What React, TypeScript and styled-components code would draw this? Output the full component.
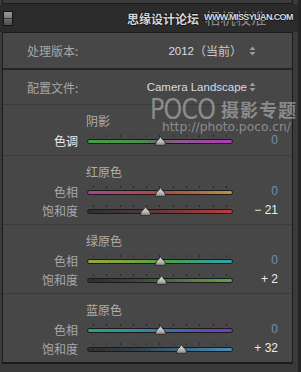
import styled, { createGlobalStyle } from "styled-components";

const GlobalStyle = createGlobalStyle`
  html, body {
    margin: 0;
    padding: 0;
    background: #2b2b2b;
  }
  body {
    font-family: "Noto Sans CJK SC", "Liberation Sans", sans-serif;
  }
`;

type Track = { label: string; value: number; gradient: string; hot?: boolean };
type Section = { title: string; tracks: Track[] };

const sections: Section[] = [
  {
    title: "阴影",
    tracks: [
      {
        label: "色调",
        value: 0,
        hot: true,
        gradient:
          "linear-gradient(90deg, #3fa33f 0%, #4d904d 35%, #686868 50%, #8a5a8c 65%, #b238b8 100%)",
      },
    ],
  },
  {
    title: "红原色",
    tracks: [
      {
        label: "色相",
        value: 0,
        gradient:
          "linear-gradient(90deg, #a8468c 0%, #ad4660 30%, #b04646 50%, #b0683e 75%, #b8953e 100%)",
      },
      {
        label: "饱和度",
        value: -21,
        gradient:
          "linear-gradient(90deg, #2e2e2e 0%, #4e3838 35%, #853a3a 70%, #c43a3a 100%)",
      },
    ],
  },
  {
    title: "绿原色",
    tracks: [
      {
        label: "色相",
        value: 0,
        gradient:
          "linear-gradient(90deg, #9aa838 0%, #78a440 30%, #4aa04a 55%, #3aa086 80%, #2fa3a8 100%)",
      },
      {
        label: "饱和度",
        value: 2,
        gradient:
          "linear-gradient(90deg, #2e2e2e 0%, #3a4a38 35%, #4f7f42 70%, #62a54a 100%)",
      },
    ],
  },
  {
    title: "蓝原色",
    tracks: [
      {
        label: "色相",
        value: 0,
        gradient:
          "linear-gradient(90deg, #2fa27a 0%, #3190a0 30%, #3a72ac 55%, #5a4eb2 80%, #7a3ab8 100%)",
      },
      {
        label: "饱和度",
        value: 32,
        gradient:
          "linear-gradient(90deg, #2e2e2e 0%, #36424a 35%, #3f6c8a 70%, #4a8fb6 100%)",
      },
    ],
  },
];

const Page = styled.div`
  position: relative;
  width: 301px;
  height: 372px;
  display: flex;
  background: #2b2b2b;
  overflow: hidden;
`;

const Column = styled.div`
  width: 298px;
  display: flex;
  flex-direction: column;
  background: #3a3a3a;
`;

const Gutter = styled.div`
  flex: 1;
  background: #242424;
`;

const PrevEdge = styled.div`
  height: 3px;
  margin: 0 5px 0 2px;
  background: #3c3c3c;
  border: 1px solid #1b1b1b;
  border-top: none;
`;

const Header = styled.div`
  position: relative;
  height: 28px;
  display: flex;
  align-items: center;
  padding: 0 10px 0 3px;
  background: #2b2b2b;
`;

const Toggle = styled.div`
  width: 8px;
  height: 13px;
  border: 1px solid #141414;
  border-radius: 1px;
  background: linear-gradient(
    180deg,
    #9a9a9a 0%,
    #7c7c7c 45%,
    #3e3e3e 45%,
    #3e3e3e 55%,
    #6a6a6a 55%,
    #4e4e4e 100%
  );
`;

const HeaderTitle = styled.span`
  margin-left: auto;
  color: #8c8c8c;
  font-size: 15px;
  line-height: 18px;
  letter-spacing: 0.5px;
`;

const Caret = styled.svg`
  margin-left: 15px;
  margin-top: 3px;
`;

const MarkCn = styled.span`
  position: absolute;
  left: 127px;
  top: 7px;
  color: #d4d4d4;
  font-size: 12px;
  font-weight: bold;
  line-height: 15px;
  text-shadow: -1px 0 #151515, 1px 0 #151515, 0 -1px #151515, 0 1px #151515;
`;

const MarkUrl = styled.span`
  position: absolute;
  left: 204px;
  top: 8px;
  color: #d8d8d8;
  font-family: "Liberation Sans", sans-serif;
  font-size: 9px;
  font-weight: bold;
  letter-spacing: -0.6px;
  line-height: 10px;
  text-shadow: -1px 0 #151515, 1px 0 #151515, 0 -1px #151515, 0 1px #151515;
`;

const Panel = styled.div`
  width: 291px;
  margin-left: 2px;
  box-sizing: border-box;
  background: #474747;
  border: 1px solid #1c1c1c;
  border-bottom-width: 2px;
`;

const SettingRow = styled.div<{ $h: number }>`
  height: ${(p) => p.$h}px;
  display: flex;
  align-items: center;
  padding: 0 36px 0 24px;
  font-size: 12px;
`;

const SettingLabel = styled.span`
  color: #a6a6a6;
`;

const SettingValue = styled.span`
  margin-left: auto;
  display: flex;
  align-items: center;
  color: #c9c9c9;
`;

const Latin = styled.span`
  font-family: "Liberation Sans", sans-serif;
  font-size: 11.5px;
  color: #d6dbe4;
`;

const Stepper = styled.svg<{ $gap: number }>`
  margin-left: ${(p) => p.$gap}px;
`;

const Divider = styled.div<{ $dark?: boolean }>`
  height: ${(p) => (p.$dark ? 2 : 1)}px;
  background: ${(p) => (p.$dark ? "#262626" : "#3b3b3b")};
`;

const SectionBox = styled.div<{ $pb: number }>`
  padding: 9px 0 ${(p) => p.$pb}px;
`;

const SectionTitle = styled.div`
  padding-left: 83px;
  margin-bottom: 3px;
  color: #aeaeae;
  font-size: 12px;
  line-height: 14px;
`;

const SliderRow = styled.div`
  display: grid;
  grid-template-columns: 84px 146px 45px;
  height: 19px;
  align-items: start;
`;

const SliderLabel = styled.span<{ $hot?: boolean }>`
  padding-right: 9px;
  text-align: right;
  color: ${(p) => (p.$hot ? "#ececec" : "#a8a8a8")};
  font-size: 12px;
  line-height: 19px;
`;

const SliderTrack = styled.div`
  position: relative;
  height: 19px;
`;

const Ticks = styled.div`
  display: flex;
  justify-content: space-between;
  height: 2px;
  margin-top: 4px;
  padding: 0 6px;
`;

const Tick = styled.i`
  width: 1px;
  height: 2px;
  background: #262626;
`;

const Rail = styled.div`
  height: 3px;
  margin-top: 2px;
  border: 1px solid #1a1a1a;
  border-radius: 3px;
`;

const Thumb = styled.svg`
  position: absolute;
  top: 5px;
`;

const SliderValue = styled.span<{ $zero: boolean }>`
  text-align: right;
  font-family: "Liberation Sans", sans-serif;
  font-size: 12px;
  line-height: 19px;
  color: ${(p) => (p.$zero ? "#7290ae" : "#ececec")};
  white-space: pre;
`;

const Poco = styled.div`
  position: absolute;
  left: 150px;
  top: 97px;
  display: flex;
  flex-direction: column;
  color: rgba(255, 255, 255, 0.38);
  pointer-events: none;
`;

const PocoTop = styled.div`
  display: flex;
  align-items: center;
  height: 24px;
`;

const PocoWord = styled.span`
  display: inline-block;
  font-family: "DejaVu Sans", sans-serif;
  font-size: 29px;
  line-height: 24px;
  letter-spacing: -1px;
  transform: scaleX(0.82);
  transform-origin: left center;
  width: 71px;
`;

const PocoCn = styled.span`
  font-size: 18px;
  font-weight: bold;
  line-height: 22px;
  letter-spacing: 1px;
`;

const PocoUrl = styled.span`
  margin-left: 12px;
  font-family: "DejaVu Sans", sans-serif;
  font-size: 12.3px;
  line-height: 12px;
`;

const formatValue = (v: number) =>
  v === 0 ? "0" : v < 0 ? `\u2212 ${Math.abs(v)}` : `+ ${v}`;

const Slider = ({ track }: { track: Track }) => {
  const left = 6 + ((track.value + 100) / 200) * 134 - 5.5;
  return (
    <SliderRow>
      <SliderLabel $hot={track.hot}>{track.label}</SliderLabel>
      <SliderTrack>
        <Ticks>
          {Array.from({ length: 11 }).map((_, i) => (
            <Tick key={i} />
          ))}
        </Ticks>
        <Rail style={{ background: track.gradient }} />
        <Thumb width="11" height="10" viewBox="0 0 11 10" style={{ left }}>
          <defs>
            <linearGradient id="thumbFill" x1="0" y1="0" x2="0" y2="1">
              <stop offset="0" stopColor="#e0e0e0" />
              <stop offset="0.6" stopColor="#b8b8b8" />
              <stop offset="1" stopColor="#8a8a8a" />
            </linearGradient>
          </defs>
          <path
            d="M5.5 0.5 L7.2 3.2 Q10.3 4.8 10.3 7.6 L10.3 9.3 L0.7 9.3 L0.7 7.6 Q0.7 4.8 3.8 3.2 Z"
            fill="url(#thumbFill)"
            stroke="#2a2a2a"
            strokeWidth="0.9"
            strokeLinejoin="round"
          />
        </Thumb>
      </SliderTrack>
      <SliderValue $zero={track.value === 0}>{formatValue(track.value)}</SliderValue>
    </SliderRow>
  );
};

const UpDown = ({ gap }: { gap: number }) => (
  <Stepper $gap={gap} width="7" height="10" viewBox="0 0 7 10">
    <path d="M3.5 0.5 L6.5 4 L0.5 4 Z" fill="#9a9a9a" />
    <path d="M0.5 6 L6.5 6 L3.5 9.5 Z" fill="#9a9a9a" />
  </Stepper>
);

export default function App() {
  return (
    <>
      <GlobalStyle />
      <Page>
        <Column>
          <PrevEdge />
          <Header>
            <Toggle />
            <HeaderTitle>相机校准</HeaderTitle>
            <Caret width="6" height="5" viewBox="0 0 6 5">
              <path d="M0 0 L6 0 L3 4.5 Z" fill="#7a7a7a" />
            </Caret>
            <MarkCn>思缘设计论坛</MarkCn>
            <MarkUrl>WWW.MISSYUAN.COM</MarkUrl>
          </Header>
          <Panel>
            <SettingRow $h={35}>
              <SettingLabel>处理版本:</SettingLabel>
              <SettingValue>
                <Latin>2012</Latin>（当前）
                <UpDown gap={7} />
              </SettingValue>
            </SettingRow>
            <Divider $dark />
            <SettingRow $h={34}>
              <SettingLabel>配置文件:</SettingLabel>
              <SettingValue>
                <Latin>Camera Landscape</Latin>
                <UpDown gap={2} />
              </SettingValue>
            </SettingRow>
            {sections.map((s, i) => (
              <div key={s.title}>
                <Divider />
                <SectionBox $pb={i === 0 ? 5 : 4}>
                  <SectionTitle>{s.title}</SectionTitle>
                  {s.tracks.map((t) => (
                    <Slider key={t.label} track={t} />
                  ))}
                </SectionBox>
              </div>
            ))}
          </Panel>
        </Column>
        <Gutter />
        <Poco>
          <PocoTop>
            <PocoWord>POCO</PocoWord>
            <PocoCn>摄影专题</PocoCn>
          </PocoTop>
          <PocoUrl>http://photo.poco.cn/</PocoUrl>
        </Poco>
      </Page>
    </>
  );
}
